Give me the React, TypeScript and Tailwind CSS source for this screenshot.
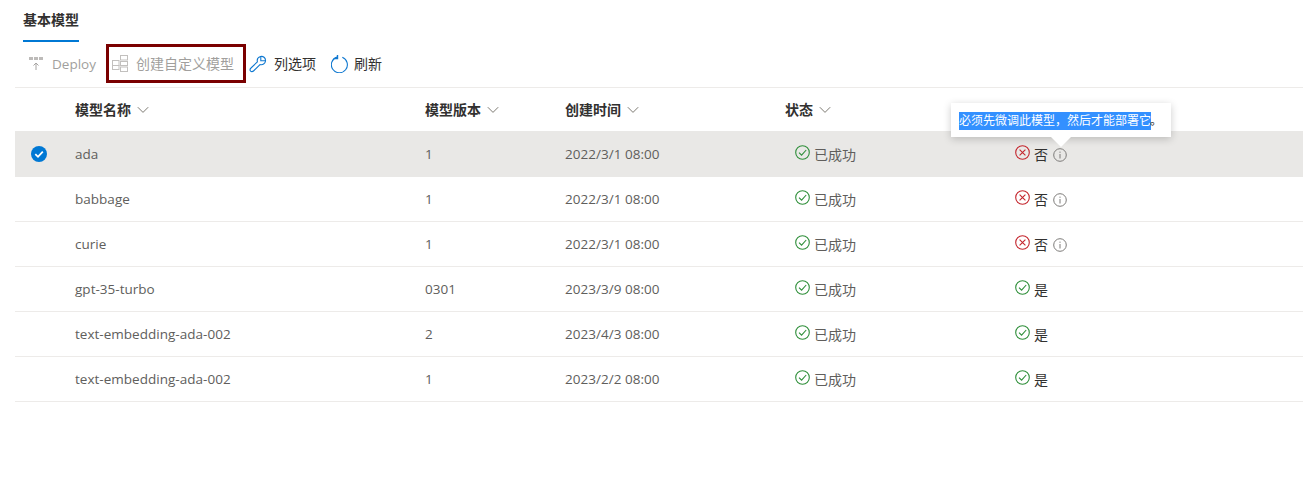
const FONT = "font-['Open_Sans','Noto_Sans_CJK_SC',sans-serif]";

function Chevron() {
  return (
    <svg width="12" height="12" viewBox="0 0 12 12" fill="none" stroke="#7d7a72" strokeWidth="1" className="ml-[6px]">
      <path d="M0.8 3.2 L6 8.4 L11.2 3.2" />
    </svg>
  );
}

function Ok() {
  return (
    <svg width="15" height="15" viewBox="0 0 15 15" fill="none" stroke="#2f8f3a" strokeWidth="1.1">
      <circle cx="7.5" cy="7.5" r="6.8" />
      <path d="M4 7.6 L6.6 10.2 L11.2 5" />
    </svg>
  );
}

function Bad() {
  return (
    <svg width="15" height="15" viewBox="0 0 15 15" fill="none" stroke="#c4262e" strokeWidth="1.1">
      <circle cx="7.5" cy="7.5" r="6.8" />
      <path d="M4.6 4.6 L10.4 10.4 M10.4 4.6 L4.6 10.4" />
    </svg>
  );
}

function Info() {
  return (
    <svg width="14" height="14" viewBox="0 0 14 14" fill="none" stroke="#7d7b79" strokeWidth="1" className="ml-[5px] mt-[1px]">
      <circle cx="7" cy="7" r="6.3" />
      <path d="M7 6 V10.5" />
      <path d="M7 3.6 V4.8" />
    </svg>
  );
}

const rows = [
  { name: "ada", ver: "1", date: "2022/3/1 08:00", ok: false },
  { name: "babbage", ver: "1", date: "2022/3/1 08:00", ok: false },
  { name: "curie", ver: "1", date: "2022/3/1 08:00", ok: false },
  { name: "gpt-35-turbo", ver: "0301", date: "2023/3/9 08:00", ok: true },
  { name: "text-embedding-ada-002", ver: "2", date: "2023/4/3 08:00", ok: true },
  { name: "text-embedding-ada-002", ver: "1", date: "2023/2/2 08:00", ok: true },
];

const GRID = "grid grid-cols-[60px_350px_140px_220px_230px_1fr]";
const LATIN = "text-[13.5px] tracking-[0.02px]";

export default function App() {
  return (
    <div className={`${FONT} w-[1303px] h-[481px] bg-white overflow-hidden text-[14px] text-[#323130] relative`}>
      <div className="pl-[23px] h-[43px] pt-[9px]">
        <div className="inline-block h-[33px] border-b-2 border-[#0078d4] font-semibold leading-[22px] text-[14px] text-[#323130] w-[56px] whitespace-nowrap">
          基本模型
        </div>
      </div>

      <div className="ml-[15px] h-[45px] border-b border-[#edebe9] flex items-start pt-[1px]">
        <div className="flex items-center h-[40px] pl-[13px] w-[91px] text-[#a19f9d] shrink-0">
          <svg width="16" height="16" viewBox="0 0 16 16" className="mr-[8px] -mt-[1px]">
            <rect x="1" y="1" width="4" height="3" fill="#bdbbb9" />
            <rect x="6" y="1" width="4" height="3" fill="#bdbbb9" />
            <rect x="11" y="1" width="4" height="3" fill="#bdbbb9" />
            <path d="M8 14 V7 M5.5 9.5 L8 7 L10.5 9.5" stroke="#a6a4a2" fill="none" />
          </svg>
          <span className="text-[13.5px]">Deploy</span>
        </div>
        <div className="flex items-center h-[39px] w-[140px] border-[3px] border-[#7a0000] pl-[3px] text-[#a19f9d] shrink-0">
          <svg width="18" height="18" viewBox="0 0 18 18" fill="none" stroke="#c2c0be" strokeWidth="1" className="mr-[6px]">
            <rect x="8.5" y="0.5" width="7" height="4.5" />
            <rect x="0.5" y="5.5" width="6.5" height="5" />
            <rect x="0.5" y="10.5" width="6.5" height="4" />
            <rect x="8.5" y="6.5" width="7" height="4" />
            <rect x="8.5" y="12" width="7" height="4.5" />
          </svg>
          <span className="whitespace-nowrap">创建自定义模型</span>
        </div>
        <div className="flex items-center h-[39px] pl-[3px] shrink-0">
          <svg width="18" height="18" viewBox="0 0 18 18" fill="none" stroke="#0f78d0" strokeWidth="1.1" className="mr-[7px]">
            <path d="M11.5 1.5 C14 0.8 16.8 2.8 16.5 6 C16.2 8.6 13.6 10.3 11 9.5 L4.5 16 C3.5 17 1.8 16.8 1.3 15.8 C0.8 14.8 1 13.8 2 13 L8.4 6.8 C7.8 4.2 9.2 2.2 11.5 1.5 Z" />
            <path d="M11.8 1.6 L11.8 5.8 L16.3 5.8" />
          </svg>
          <span className="whitespace-nowrap">列选项</span>
        </div>
        <div className="flex items-center h-[39px] pl-[15px] shrink-0">
          <svg width="18" height="18" viewBox="0 0 18 18" fill="none" stroke="#0f78d0" strokeWidth="1.1" className="mr-[5px]">
            <path d="M11.3 2.3 A8 8 0 1 1 6 2.1" />
            <path d="M6.5 0 V3.6 H2.6" strokeWidth="1.4" />
          </svg>
          <span className="whitespace-nowrap">刷新</span>
        </div>
      </div>

      <div className="ml-[15px]">
        <div className={`${GRID} h-[43px] items-center font-semibold`}>
          <div />
          <div className="flex items-center">模型名称<Chevron /></div>
          <div className="flex items-center">模型版本<Chevron /></div>
          <div className="flex items-center">创建时间<Chevron /></div>
          <div className="flex items-center">状态<Chevron /></div>
          <div />
        </div>
        {rows.map((r, i) => (
          <div
            key={i}
            className={`${GRID} ${i === 0 ? "h-[46px] pt-[1px] bg-[#e9e8e6] border-[#e9e8e6]" : "h-[45px] border-[#edebe9]"} items-center border-b text-[#605e5c]`}
          >
            <div className="flex justify-center pr-[12px]">
              {i === 0 && (
                <svg width="16" height="16" viewBox="0 0 16 16">
                  <circle cx="8" cy="8" r="8" fill="#0078d4" />
                  <path d="M4.3 8.2 L7 10.8 L11.8 5.6" fill="none" stroke="#fff" strokeWidth="1.8" />
                </svg>
              )}
            </div>
            <div className={LATIN}>{r.name}</div>
            <div className={LATIN}>{r.ver}</div>
            <div className={LATIN}>{r.date}</div>
            <div className="flex items-center pl-[10px] gap-[4px]">
              <span className="-mt-[3px]"><Ok /></span>
              <span>已成功</span>
            </div>
            <div className="flex items-center">
              <span className="-mt-[3px] mr-[4px]">{r.ok ? <Ok /> : <Bad />}</span>
              <span className="text-[#323130]">{r.ok ? "是" : "否"}</span>
              {!r.ok && <Info />}
            </div>
          </div>
        ))}
      </div>

      <div className="absolute left-[951px] top-[103px] w-[220px] h-[34px] bg-white shadow-[0_2px_8px_rgba(0,0,0,0.2)] flex items-center pl-[8px] pt-[1px] text-[12px] text-[#323130]">
        <span className="bg-[#3390ff] text-white leading-[18px] whitespace-nowrap">必须先微调此模型，然后才能部署它</span>
        <span className="-ml-[1px]">。</span>
        <div className="absolute left-[99px] top-[33px] w-0 h-0 border-x-[11px] border-x-transparent border-t-[11px] border-t-white" />
      </div>
    </div>
  );
}
